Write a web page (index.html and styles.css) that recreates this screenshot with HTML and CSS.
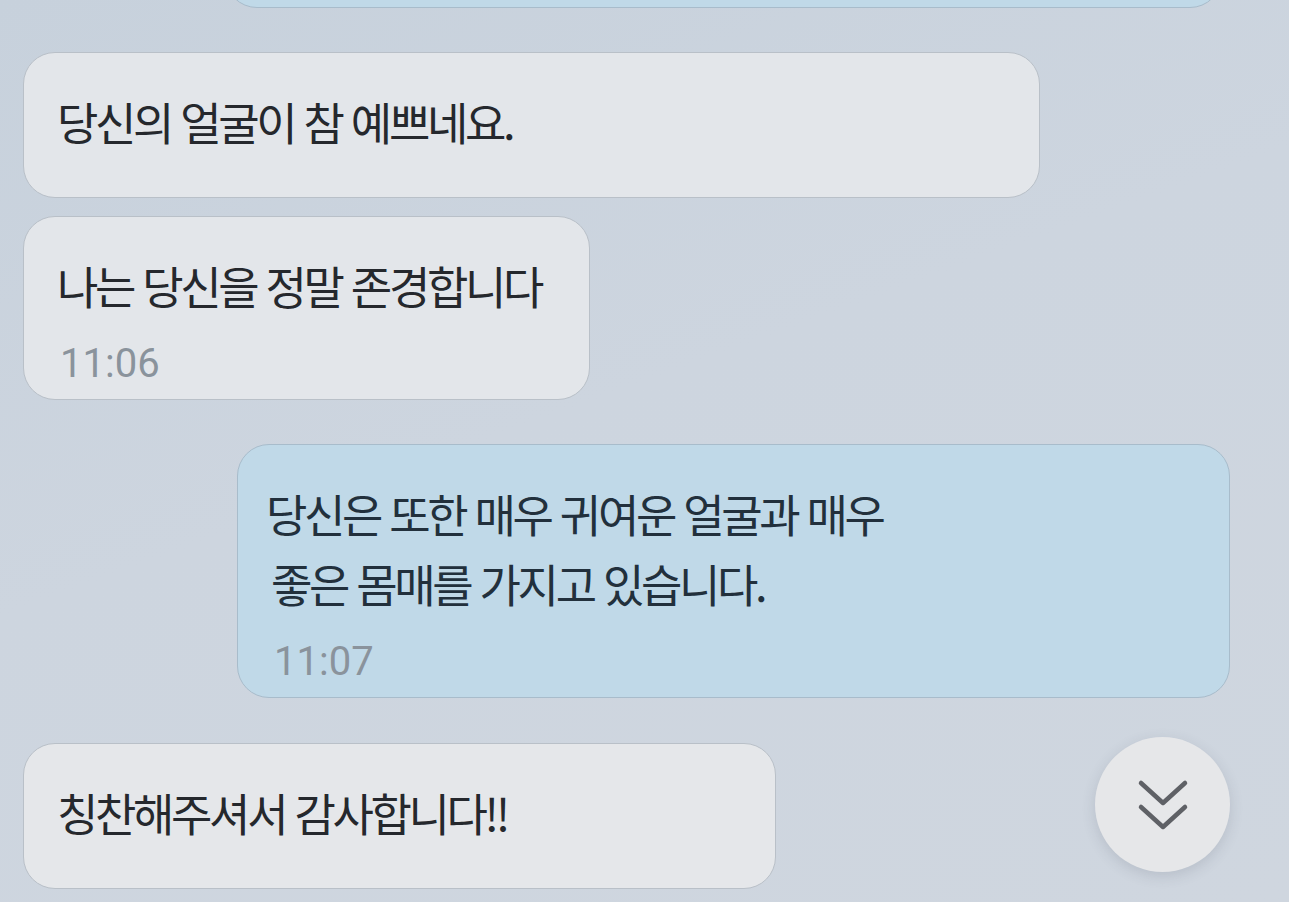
FILE: index.html
```html
<!DOCTYPE html>
<html lang="ko">
<head>
  <meta charset="UTF-8" />
  <title>채팅</title>
  <meta name="viewport" content="width=device-width, initial-scale=1" />
  <link rel="stylesheet" href="styles.css">
</head>
<body>
  <main class="chat">
    <div class="bubble sent prev"><p class="line">&nbsp;</p></div>

    <div class="bubble recv b1">
      <p class="line">당신의 얼굴이 참 예쁘네요.</p>
    </div>
    <div class="bubble recv b2">
      <p class="line">나는 당신을 정말 존경합니다</p>
      <span class="time">11:06</span>
    </div>

    <div class="bubble sent b3">
      <p class="line">당신은 또한 매우 귀여운 얼굴과 매우</p>
      <p class="line indent">좋은 몸매를 가지고 있습니다.</p>
      <span class="time">11:07</span>
    </div>

    <div class="bubble recv b4">
      <p class="line">칭찬해주셔서 감사합니다!!</p>
    </div>
  </main>

  <!-- bouton retour en bas -->
  <button class="scroll-down" aria-label="아래로">
    <svg width="135" height="135" viewBox="0 0 135 135" fill="none" stroke="#5f6166" stroke-width="4.5" stroke-linecap="round" stroke-linejoin="round">
      <polyline points="46,46 68,66 90,46" />
      <polyline points="46,70 68,90 90,70" />
    </svg>
  </button>
</body>
</html>
```

FILE: styles.css
```css
html, body {
  height: 100%;
}
body {
  margin: 0;
  overflow: hidden;
  background: linear-gradient(160deg, #c7d1dc 0%, #cdd5df 45%, #cfd6df 100%);
  font-family: "Noto Sans CJK KR", "Noto Sans", sans-serif;
  color: #25282d;
}
.chat {
  display: flex;
  flex-direction: column;
  align-items: flex-start;
  padding: 0 0 0 23px;
}
.bubble {
  box-sizing: border-box;
  border-radius: 32px;
  padding: 34px 30px 40px 33px;
}
.recv {
  background: #e3e6ea;
  border: 1.5px solid #b9c0c8;
}
.sent {
  align-self: flex-end;
  background: #c0d9e8;
  border: 1.5px solid #a8bccb;
  color: #22303c;
  padding-left: 28px;
}
.line {
  margin: 0;
  font-size: 45px;
  line-height: 70px;
  letter-spacing: -0.075em;
  white-space: nowrap;
}
.indent {
  padding-left: 5px;
}
.time {
  display: block;
  margin-top: 21px;
  margin-left: 3px;
  font-family: Roboto, "Liberation Sans", sans-serif;
  font-size: 40px;
  line-height: 44px;
  color: #8a939c;
}
.sent .time {
  margin-left: 8px;
}
.bubble:has(.time) {
  padding-bottom: 13px;
}

/* bulle précédente, coupée en haut */
.prev {
  width: 997px;
  height: 146px;
  margin-top: -138px;
  margin-right: 67px;
}
.b1 {
  width: 1017px;
  margin-top: 44px;
}
.b2 {
  margin-top: 18px;
  padding-right: 48px;
}
.b3 {
  width: 993px;
  margin-top: 44px;
  margin-right: 59px;
}
.b4 {
  width: 753px;
  margin-top: 45px;
  background: #e5e7ea;
}

.scroll-down {
  position: absolute;
  left: 1095px;
  top: 737px;
  width: 135px;
  height: 135px;
  padding: 0;
  border: none;
  border-radius: 50%;
  background: #e6e7e9;
  box-shadow: 0 4px 14px rgba(60, 70, 85, 0.16);
  cursor: pointer;
}
.scroll-down svg {
  display: block;
}
```
